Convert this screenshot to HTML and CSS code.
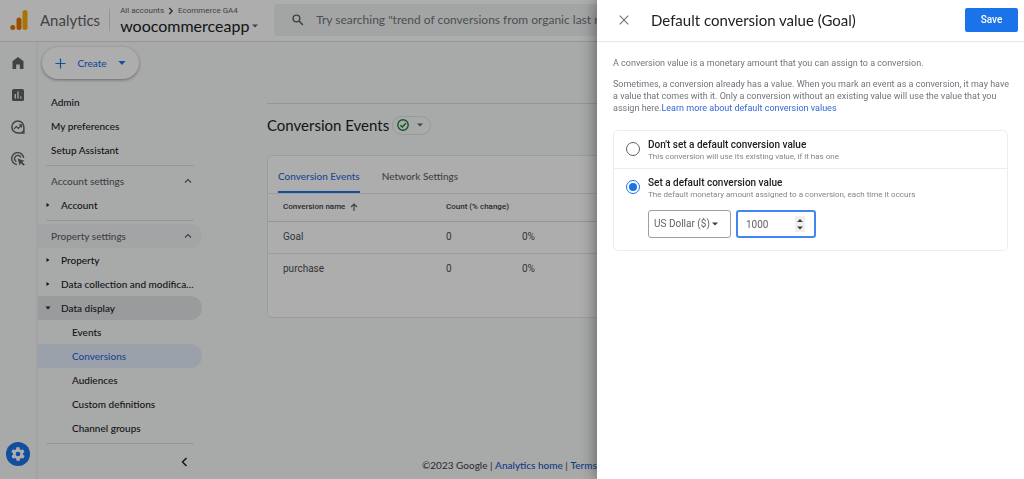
FILE: index.html
```html
<!DOCTYPE html>
<html lang="en">
<head>
<meta charset="utf-8">
<meta name="viewport" content="width=device-width, initial-scale=1">
<title>Analytics – Conversions</title>
<link rel="stylesheet" href="styles.css">
</head>
<body>
<div class="app">
  <header class="topbar">
    <a class="brand" href="#">
      <svg class="brand-logo" viewBox="0 0 18 22" aria-hidden="true"><rect x="12.5" y="1" width="5" height="20" rx="2.5" fill="#f9ab00"/><rect x="6.5" y="8.5" width="5" height="12.5" rx="2.5" fill="#e37400"/><circle cx="2.8" cy="18.5" r="2.5" fill="#e37400"/></svg>
      <span class="brand-name">Analytics</span>
    </a>
    <div class="account">
      <div class="crumbs">All accounts <svg class="crumb-arrow" viewBox="0 0 6 8" aria-hidden="true"><path d="M1.2 1l3 3-3 3"/></svg> Ecommerce GA4</div>
      <button class="property" type="button">woocommerceapp <svg class="caret" viewBox="0 0 6 4" aria-hidden="true"><path d="M0 .5h6L3 3.5z"/></svg></button>
    </div>
    <label class="search">
      <svg class="search-icon" viewBox="0 0 14 14" aria-hidden="true"><circle cx="5.2" cy="5.2" r="3.9"/><path d="M8.1 8.1l4.6 4.6"/></svg>
      <input class="search-input" type="search" aria-label="Search" placeholder="Try searching &quot;trend of conversions from organic last month&quot;">
    </label>
  </header>
  <div class="body">
    <nav class="rail" aria-label="Main">
      <a href="#" aria-label="Home"><svg class="rail-icon" viewBox="0 0 14 14"><path fill="#5f6368" d="M1.5 5.3L7 .9l5.5 4.4V13H8.8V8.4H5.2V13H1.5z"/></svg></a>
      <a href="#" aria-label="Reports"><svg class="rail-icon" viewBox="0 0 14 14"><rect x="1" y="1" width="12" height="12" rx="1.5" fill="#5f6368"/><path d="M4.3 6v4.5M7 3.5v7M9.8 8.4v2.1" stroke="#f8f9fa" stroke-width="1.3"/></svg></a>
      <a href="#" aria-label="Explore"><svg class="rail-icon" viewBox="0 0 14 14" fill="none" stroke="#5f6368" stroke-width="1.5"><path d="M12.9 7v6H7A6 6 0 1 1 12.9 7z"/><path d="M3 8.8l2.3-2.3 2 2 3-3M8 4.9h2.6v2.6" stroke-width="1.2"/><path d="M12.7 9.8v3H9.8z" fill="#5f6368" stroke="none"/></svg></a>
      <a href="#" aria-label="Advertising"><svg class="rail-icon" viewBox="0 0 14 14" fill="none" stroke="#5f6368" stroke-width="1.4"><path d="M6 12.6A6 6 0 1 1 12.7 6"/><path d="M5.4 9.7A3.3 3.3 0 1 1 9.9 5.5"/><path d="M6.5 6.4l6.9 2.3-2.2 1.3 2.6 2.6-1.2 1.2-2.6-2.6-1.3 2.2z" fill="#5f6368" stroke="none"/></svg></a>
      <a class="rail-admin" href="#" aria-label="Admin"><svg class="gear" viewBox="0 0 24 24"><path fill="#fff" d="M19.4 13c0-.3.1-.6.1-1s0-.7-.1-1l2.1-1.6c.2-.2.3-.4.1-.7l-2-3.4c-.1-.2-.4-.3-.6-.2l-2.5 1c-.5-.4-1.1-.7-1.700-1l-.4-2.600c0-.3-.2-.5-.5-.5h-4c-.2 0-.5.2-.5.4l-.4 2.700c-.6.2-1.100.6-1.700 1l-2.500-1c-.2-.1-.5 0-.6.2l-2 3.400c-.1.2-.1.5.1.7L4.600 11c0 .3-.1.6-.1 1s0 .7.1 1l-2.100 1.600c-.2.2-.3.4-.1.7l2 3.400c.1.2.4.3.6.2l2.500-1c.5.4 1.100.7 1.700 1l.4 2.600c0 .3.2.5.5.5h4c.2 0 .5-.2.5-.4l.4-2.700c.6-.2 1.100-.6 1.700-1l2.500 1c.2.1.5 0 .6-.2l2-3.400c.1-.2.1-.5-.1-.7zM12 15.500a3.500 3.500 0 1 1 0-7 3.500 3.500 0 0 1 0 7z"/></svg></a>
    </nav>
    <nav class="side" aria-label="Admin">
      <button class="create" type="button"><svg class="plus" viewBox="0 0 12 12" aria-hidden="true"><path d="M6 .5v11M.5 6h11"/></svg><span>Create</span><svg class="create-caret" viewBox="0 0 8 4" aria-hidden="true"><path d="M.5 0h7L4 4z"/></svg></button>
      <a class="item" href="#">Admin</a>
      <a class="item" href="#">My preferences</a>
      <a class="item" href="#">Setup Assistant</a>
      <hr class="rule">
      <button class="item section" type="button">Account settings<svg class="chev" viewBox="0 0 8 6" aria-hidden="true"><path d="M1 4.500l3-3 3 3"/></svg></button>
      <a class="item group" href="#"><svg class="tri" viewBox="0 0 6 6" aria-hidden="true"><path d="M1.500 1v4L4.500 3z"/></svg>Account</a>
      <hr class="rule">
      <button class="item section shaded" type="button">Property settings<svg class="chev" viewBox="0 0 8 6" aria-hidden="true"><path d="M1 4.500l3-3 3 3"/></svg></button>
      <a class="item group" href="#"><svg class="tri" viewBox="0 0 6 6" aria-hidden="true"><path d="M1.500 1v4L4.500 3z"/></svg>Property</a>
      <a class="item group" href="#"><svg class="tri" viewBox="0 0 6 6" aria-hidden="true"><path d="M1.500 1v4L4.500 3z"/></svg><span class="clip">Data collection and modification</span></a>
      <a class="item group open" href="#"><svg class="tri" viewBox="0 0 6 6" aria-hidden="true"><path d="M.5 1.500h5L3 4.500z"/></svg>Data display</a>
      <a class="item leaf" href="#">Events</a>
      <a class="item leaf current" href="#" aria-current="page">Conversions</a>
      <a class="item leaf" href="#">Audiences</a>
      <a class="item leaf" href="#">Custom definitions</a>
      <a class="item leaf" href="#">Channel groups</a>
      <hr class="rule">
      <button class="collapse" type="button" aria-label="Collapse menu"><svg class="collapse-icon" viewBox="0 0 7 10"><path d="M5.500 1l-4 4 4 4"/></svg></button>
    </nav>
    <main class="main">
      <div class="heading">
        <h1>Conversion Events</h1>
        <button class="status" type="button" aria-label="Data status"><svg class="ok" viewBox="0 0 12 12"><circle cx="6" cy="6" r="5.200"/><path d="M3.400 6.200l1.900 1.800 3.500-3.800"/></svg><svg class="caret" viewBox="0 0 6 4"><path d="M0 .5h6L3 3.500z"/></svg></button>
      </div>
      <section class="card">
        <div class="tabs" role="tablist">
          <button class="tab active" type="button" role="tab" aria-selected="true">Conversion Events</button>
          <button class="tab" type="button" role="tab" aria-selected="false">Network Settings</button>
        </div>
        <table class="events">
          <thead><tr><th class="col-name">Conversion name <svg class="sort" viewBox="0 0 8 8" aria-hidden="true"><path d="M4 8V1M1 4l3-3 3 3"/></svg></th><th class="col-count">Count (% change)</th><th></th></tr></thead>
          <tbody>
            <tr><td>Goal</td><td>0</td><td>0%</td></tr>
            <tr><td>purchase</td><td>0</td><td>0%</td></tr>
          </tbody>
        </table>
      </section>
      <footer class="foot">©2023 Google | <a href="#">Analytics home</a> | <a href="#">Terms of Service</a></footer>
    </main>
  </div>
</div>
<div class="scrim">
  <aside class="drawer" role="dialog" aria-labelledby="drawer-title">
    <header class="drawer-head">
      <button class="close" type="button" aria-label="Close"><svg class="close-icon" viewBox="0 0 10 10"><path d="M.7.7l8.600 8.600M9.300.7L.7 9.300"/></svg></button>
      <h2 id="drawer-title">Default conversion value (Goal)</h2>
      <button class="save" type="button">Save</button>
    </header>
    <div class="drawer-body">
      <p>A conversion value is a monetary amount that you can assign to a conversion.</p>
      <p>Sometimes, a conversion already has a value. When you mark an event as a conversion, it may have a value that comes with it. Only a conversion without an existing value will use the value that you assign here.<a href="#">Learn more about default conversion values</a></p>
      <form class="options">
        <div class="option">
          <input class="radio" type="radio" name="mode" id="mode-none">
          <label for="mode-none"><span class="opt-title">Don't set a default conversion value</span><span class="opt-note">This conversion will use its existing value, if it has one</span></label>
        </div>
        <div class="option option-set">
          <input class="radio" type="radio" name="mode" id="mode-set" checked>
          <label for="mode-set"><span class="opt-title">Set a default conversion value</span><span class="opt-note">The default monetary amount assigned to a conversion, each time it occurs</span></label>
          <div class="fields">
            <div class="currency">
              <select class="currency-select" aria-label="Currency"><option>US Dollar ($)</option></select>
              <svg class="currency-caret" viewBox="0 0 6 4" aria-hidden="true"><path d="M0 .5h6L3 3.500z"/></svg>
            </div>
            <div class="amount">
              <input class="amount-input" type="number" aria-label="Value" value="1000">
              <svg class="spin" viewBox="0 0 10 16" aria-hidden="true"><path d="M2 6h6L5 3zM2 10.500h6L5 13.500z"/></svg>
            </div>
          </div>
        </div>
      </form>
    </div>
  </aside>
</div>
</body>
</html>
```
FILE: styles.css
```css
* { box-sizing: border-box; }
:root {
  --line: #e4e6e8;
  --blue: #1a73e8;
  --ink: #202124;
  --grey: #5f6368;
}
body { margin: 0; overflow: hidden; font-family: Roboto, sans-serif; font-size: 10px; color: var(--ink); background: #f8f9fa; }
button { font: inherit; color: inherit; background: none; border: 0; padding: 0; cursor: pointer; }
a { color: inherit; text-decoration: none; }
svg { display: block; flex: none; }

.app { display: flex; flex-direction: column; min-height: 100vh; font-family: Lato, sans-serif; }
.topbar { display: flex; align-items: center; height: 42px; padding: 0 0 1px 10px; background: #fff; border-bottom: 1px solid #dadce0; }
.brand { display: flex; align-items: center; gap: 12px; padding-right: 9px; border-right: 1px solid #dadce0; }
.brand-logo { width: 18px; height: 22px; }
.brand-name { font-size: 15px; line-height: 22px; color: var(--grey); }
.account { padding-left: 10px; width: 164px; flex: none; }
.crumbs { display: flex; align-items: center; gap: 4px; font: 8px/12px Roboto, sans-serif; color: var(--grey); white-space: nowrap; }
.crumb-arrow { width: 6px; height: 8px; fill: none; stroke: #3c4043; stroke-width: 1.3; }
.property { display: flex; align-items: center; gap: 3px; font-size: 16px; line-height: 18px; }
.caret { width: 6px; height: 4px; fill: var(--grey); }
.search { flex: 1; display: flex; align-items: center; gap: 12px; height: 32px; padding-left: 18px; background: #f1f3f4; border-radius: 4px 0 0 4px; }
.search-icon { width: 12px; height: 12px; fill: none; stroke: var(--grey); stroke-width: 1.7; }
.search-input { flex: 1; min-width: 0; border: 0; background: none; padding: 0; font: 12px/16px Lato, sans-serif; outline: 0; }
.search-input::placeholder { color: #70757a; opacity: 1; }

.body { flex: 1; display: flex; }
.rail { flex: none; width: 38px; display: flex; flex-direction: column; align-items: center; gap: 18px; padding: 14px 0 13px; border-right: 2px solid #f0f1f3; }
.rail-icon { width: 14px; height: 14px; }
.rail-admin { display: grid; place-items: center; width: 24px; height: 24px; margin-top: auto; border-radius: 50%; background: var(--blue); }
.gear { width: 16px; height: 16px; }

.side { flex: none; width: 164px; font-weight: 500; }
.create { display: flex; align-items: center; gap: 10px; height: 32px; width: 97px; margin: 5px 0 11px 4px; padding: 0 13px; border-radius: 16px; background: #fff; color: var(--blue); box-shadow: 0 1px 3px rgba(60,64,67,.5); }
.create span { flex: 1; }
.plus { width: 11px; height: 11px; fill: none; stroke: var(--blue); stroke-width: 1.3; }
.create-caret { width: 8px; height: 4px; fill: var(--blue); }
.item { display: flex; align-items: center; width: 100%; height: 24px; padding: 0 10px 0 13px; border-radius: 0 12px 12px 0; text-align: left; white-space: nowrap; }
.section { justify-content: space-between; color: var(--grey); }
.chev { width: 8px; height: 6px; fill: none; stroke: var(--grey); stroke-width: 1.2; }
.group { gap: 10px; padding: 0 6px 0 7px; }
.tri { width: 6px; height: 6px; fill: var(--ink); }
.clip { overflow: hidden; text-overflow: ellipsis; }
.leaf { padding-left: 34px; }
.shaded { background: #f1f2f3; }
.open { background: #e4e5e7; }
.current { background: #e3eefd; color: #3367d6; }
.rule { height: 1px; margin: 3px 8px; border: 0; background: #dcdee1; }
.collapse { display: grid; place-items: center; width: 20px; height: 20px; margin: 8px 0 4px 136px; }
.collapse-icon { width: 7px; height: 10px; fill: none; stroke: var(--ink); stroke-width: 1.5; }

.main { flex: 1; min-width: 0; display: flex; flex-direction: column; padding: 61px 0 6px 65px; }
.heading { display: flex; align-items: center; gap: 3px; padding-top: 11px; border-top: 1px solid #dcdee1; }
h1, h2 { margin: 0; font-weight: 400; }
h1 { font-size: 15px; line-height: 20px; }
.status { display: flex; align-items: center; gap: 8px; height: 19px; padding: 0 7px 0 4px; border: 1px solid #e0e2e5; border-radius: 10px; }
.ok { width: 12px; height: 12px; fill: none; stroke: #188038; stroke-width: 1.4; }
.card { min-height: 163px; margin-top: 20px; background: #fff; border: 1px solid var(--line); border-radius: 5px 0 0 5px; }
.tabs { display: flex; gap: 22px; padding-left: 10px; border-bottom: 1px solid var(--line); }
.tab { height: 37px; padding-top: 5px; border-bottom: 2px solid transparent; color: var(--grey); font-weight: 500; }
.tab.active { color: #3367d6; border-color: var(--blue); }
.events { width: 100%; table-layout: fixed; border-collapse: collapse; font: 10px/12px Roboto, sans-serif; color: #4d5156; }
.events th { height: 27px; padding: 0; font-size: 8px; font-weight: 500; text-align: left; color: #3c4043; border-bottom: 1px solid #dadce0; }
.events td { height: 32px; padding: 0; }
.events tbody tr:first-child td { border-bottom: 1px solid var(--line); }
.events th:first-child, .events td:first-child { padding-left: 15px; }
.col-name { width: 178px; }
.col-count { width: 76px; white-space: nowrap; }
.sort { display: inline-block; width: 8px; height: 8px; margin-left: 3px; fill: none; stroke: var(--grey); stroke-width: 1.2; vertical-align: middle; }
.foot { margin-top: auto; padding-left: 155px; font-size: 10px; line-height: 16px; color: #3c4043; white-space: nowrap; overflow: hidden; }
.foot a { color: #1a56c4; font-weight: 500; }

.scrim { position: fixed; inset: 0; display: flex; justify-content: flex-end; background: rgba(0,0,0,.32); }
.drawer { width: 427px; max-width: 100%; background: #fff; box-shadow: 0 0 16px rgba(0,0,0,.5); }
.drawer-head { display: flex; align-items: center; height: 42px; padding: 0 6px 2px 21px; border-bottom: 1px solid var(--line); }
.close { display: grid; place-items: center; width: 12px; height: 20px; margin-right: 21px; }
.close-icon { width: 10px; height: 10px; fill: none; stroke: #70757a; stroke-width: 1.2; }
h2 { flex: 1; font: 15px/20px Lato, sans-serif; }
.save { width: 53px; height: 24px; border-radius: 2px; background: var(--blue); color: #fff; font-weight: 500; }
.drawer-body { padding: 15px 10px 15px 16px; font-size: 9px; line-height: 12px; color: #70757a; }
p { margin: 0 0 9px; }
p a { color: #3367d6; }
.options { margin: 16px 6px 0 0; border: 1px solid #eceded; border-radius: 5px; }
.option { display: grid; grid-template-columns: 14px 1fr; column-gap: 8px; align-items: center; padding: 7px 12px 6px; }
.option-set { border-top: 1px solid #eceded; padding-bottom: 12px; }
.radio { appearance: none; display: grid; place-items: center; width: 14px; height: 14px; margin: 0 0 2px; border: 1px solid var(--grey); border-radius: 50%; }
.radio:checked { border-color: var(--blue); }
.radio:checked::before { content: ""; width: 8px; height: 8px; border-radius: 50%; background: var(--blue); }
.opt-title, .opt-note { display: block; }
.opt-title { font-size: 10px; line-height: 13px; font-weight: 500; color: var(--ink); }
.opt-note { font-size: 8px; line-height: 11px; color: #80868b; }
.fields { grid-column: 2; display: flex; gap: 5px; margin-top: 10px; }
.currency, .amount { position: relative; height: 28px; }
.currency { width: 83px; }
.amount { width: 80px; }
.currency-select, .amount-input { appearance: none; width: 100%; height: 28px; padding: 0 5px; border: 1px solid #9aa0a6; border-radius: 3px; background: #fff; font: 10px/16px Roboto, sans-serif; color: #5f6368; outline: 0; }
.amount-input { padding: 0 8px; border: 2px solid #4285f4; appearance: textfield; }
.amount-input::-webkit-inner-spin-button { appearance: none; margin: 0; }
.currency-caret { position: absolute; right: 13px; top: 12px; width: 6px; height: 4px; fill: #3c4043; }
.spin { position: absolute; right: 11px; top: 6px; width: 10px; height: 16px; background: #efefef; fill: #3c4043; pointer-events: none; }
```
